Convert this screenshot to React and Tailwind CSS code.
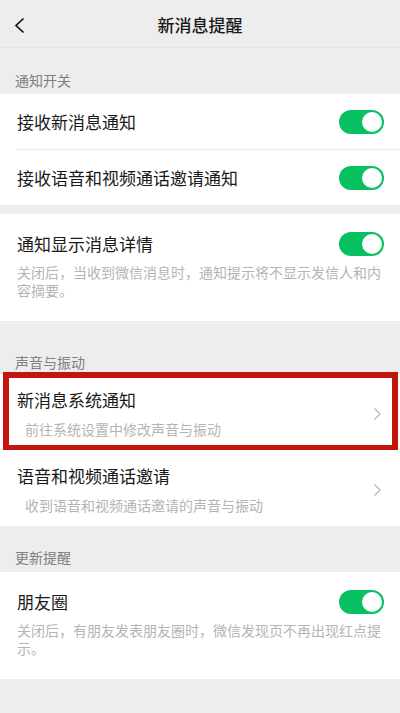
import React from 'react';

const font = { fontFamily: '"Noto Sans CJK SC", "Noto Sans", sans-serif' };

const Toggle = () => (
  <div className="w-[45px] h-[24px] rounded-full bg-[#07c160] flex items-center justify-end pr-[2px] shrink-0">
    <div className="w-[20px] h-[20px] rounded-full bg-white" />
  </div>
);

const Chevron = () => (
  <svg width="9" height="14" viewBox="0 0 9 14" className="shrink-0">
    <path d="M1.5 1.5 L7 7 L1.5 12.5" fill="none" stroke="#b8b8b8" strokeWidth="1.4" />
  </svg>
);

const SectionLabel = ({ children, className }) => (
  <div className={`px-[15px] text-[14px] leading-[20px] text-[#808080] ${className}`}>{children}</div>
);

const SwitchRow = ({ title }) => (
  <div className="h-[55px] pl-[17px] pr-[16px] flex items-center justify-between bg-white">
    <span className="text-[17px] text-[#191919]">{title}</span>
    <Toggle />
  </div>
);

const DetailSwitch = ({ title, desc }) => (
  <div className="bg-white pl-[17px] pr-[16px] pt-[18px] pb-[22px]">
    <div className="flex items-center justify-between h-[24px]">
      <span className="text-[17px] text-[#191919]">{title}</span>
      <Toggle />
    </div>
    <p className="mt-[7px] text-[14px] leading-[18px] text-[#b4b4b4] pr-[2px]">{desc}</p>
  </div>
);

const LinkRow = ({ title, desc, marked }) => (
  <div className="relative bg-white h-[76px] pl-[17px] pr-[18px] flex items-center justify-between">
    <div className="pt-[1px]">
      <div className="text-[17px] leading-[24px] text-[#191919]">{title}</div>
      <div className="mt-[8px] pl-[8px] text-[14px] leading-[18px] text-[#b4b4b4]">{desc}</div>
    </div>
    <div className="mt-[4px]">
      <Chevron />
    </div>
    {marked && (
      <div className="absolute left-[3px] right-[2px] top-[-2px] bottom-[-1px] border-[6px] border-[#c0160e] pointer-events-none" />
    )}
  </div>
);

const App = () => {
  return (
    <div className="w-[400px] h-[713px] bg-[#ededed] overflow-hidden" style={font}>
      <div className="h-[48px] flex items-center relative border-b border-[#e4e4e4]">
        <div className="absolute left-[14px] top-[17px]">
          <svg width="11" height="17" viewBox="0 0 11 17">
            <path d="M9.5 1.5 L2 8.5 L9.5 15.5" fill="none" stroke="#111" strokeWidth="1.7" />
          </svg>
        </div>
        <div className="flex-1 text-center text-[17px] font-medium text-[#191919] pt-[3px]">新消息提醒</div>
      </div>

      <SectionLabel className="pt-[22px] pb-[4px]">通知开关</SectionLabel>
      <div className="bg-white">
        <SwitchRow title="接收新消息通知" />
        <div className="ml-[16px] h-px bg-[#ececec]" />
        <SwitchRow title="接收语音和视频通话邀请通知" />
      </div>

      <div className="h-[9px]" />
      <DetailSwitch
        title="通知显示消息详情"
        desc="关闭后，当收到微信消息时，通知提示将不显示发信人和内容摘要。"
      />

      <SectionLabel className="pt-[31px] pb-[2px]">声音与振动</SectionLabel>
      <LinkRow title="新消息系统通知" desc="前往系统设置中修改声音与振动" marked />
      <LinkRow title="语音和视频通话邀请" desc="收到语音和视频通话邀请的声音与振动" />

      <SectionLabel className="pt-[21px] pb-[5px]">更新提醒</SectionLabel>
      <DetailSwitch
        title="朋友圈"
        desc="关闭后，有朋友发表朋友圈时，微信发现页不再出现红点提示。"
      />
    </div>
  );
};

export default App;
